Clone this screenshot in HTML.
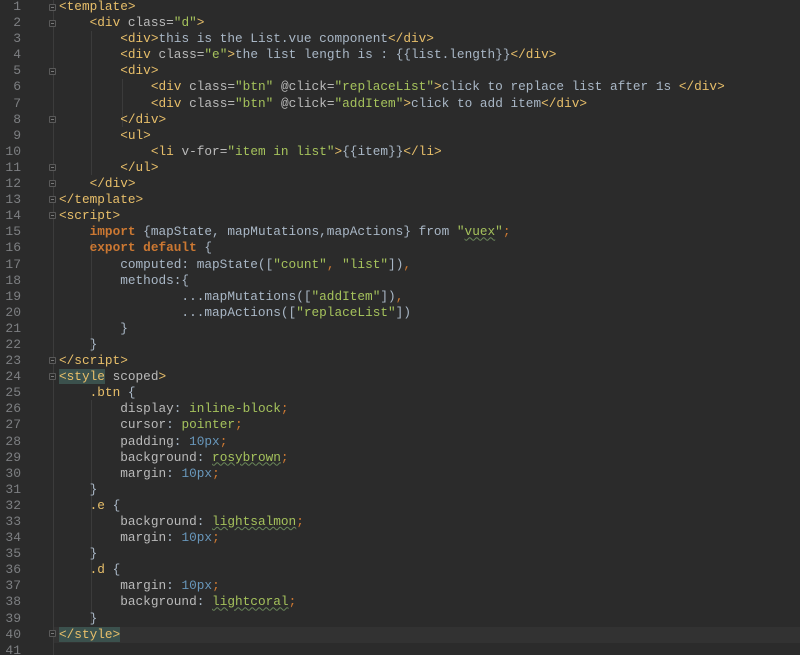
<!DOCTYPE html>
<html><head><style>
html,body{margin:0;padding:0;background:#2b2b2b;width:800px;height:655px;overflow:hidden}
.wrap{position:relative;width:800px;height:655px}
.gut{position:absolute;left:0;top:0;width:53px;height:655px;background:#2b2b2b;border-right:1px solid #3c3c3c}
.ln{position:absolute;left:0;width:21px;text-align:right;color:#7d7f82;font:13px/16.1px "Liberation Mono",monospace}
.code{position:absolute;left:59px;top:-1px;margin:0;color:#a9b7c6;font:12.75px/16.1px "Liberation Mono",monospace;white-space:pre}
.cur{position:absolute;left:54px;top:627px;width:746px;height:16px;background:#323232}
.t{color:#e8bf6a}.a{color:#bababa}.s{color:#a5c25c}.k{color:#cc7832;font-weight:bold}.o{color:#cc7832}.n{color:#6897bb}.p{color:#bababa}.v{color:#a5c25c}
.m{background:#3b514d}
.u{text-decoration:underline wavy #6a8759;text-decoration-thickness:1px}
.g{position:absolute;width:1px;background:#3b3b3b}
.f{position:absolute;left:49px;width:7px;height:7px;border:1px solid #5a5a5a;border-radius:1px;background:#2b2b2b;box-sizing:border-box}
.f:after{content:"";position:absolute;left:1px;top:2px;width:3px;height:1px;background:#7a7a7a}
</style></head><body><div class="wrap">
<div class="gut"></div>
<div class="cur"></div>
<div class="g" style="left:91px;top:31px;height:144px"></div>
<div class="g" style="left:122px;top:79px;height:48px"></div>
<div class="g" style="left:91px;top:240px;height:112px"></div>
<div class="g" style="left:91px;top:400px;height:224px"></div>
<div class="f" style="top:4px"></div><div class="f" style="top:20px"></div><div class="f" style="top:68px"></div>
<div class="f" style="top:116px"></div><div class="f" style="top:180px"></div><div class="f" style="top:196px"></div>
<div class="f" style="top:212px"></div><div class="f" style="top:357px"></div><div class="f" style="top:373px"></div>
<div class="f" style="top:164px"></div><div class="f" style="top:630px"></div>
<pre class="code"><span class="t">&lt;template&gt;</span>
    <span class="t">&lt;div</span> <span class="a">class=</span><span class="s">"d"</span><span class="t">&gt;</span>
        <span class="t">&lt;div&gt;</span>this is the List.vue component<span class="t">&lt;/div&gt;</span>
        <span class="t">&lt;div</span> <span class="a">class=</span><span class="s">"e"</span><span class="t">&gt;</span>the list length is : {{list.length}}<span class="t">&lt;/div&gt;</span>
        <span class="t">&lt;div&gt;</span>
            <span class="t">&lt;div</span> <span class="a">class=</span><span class="s">"btn"</span> <span class="a">@click=</span><span class="s">"replaceList"</span><span class="t">&gt;</span>click to replace list after 1s <span class="t">&lt;/div&gt;</span>
            <span class="t">&lt;div</span> <span class="a">class=</span><span class="s">"btn"</span> <span class="a">@click=</span><span class="s">"addItem"</span><span class="t">&gt;</span>click to add item<span class="t">&lt;/div&gt;</span>
        <span class="t">&lt;/div&gt;</span>
        <span class="t">&lt;ul&gt;</span>
            <span class="t">&lt;li</span> <span class="a">v-for=</span><span class="s">"item in list"</span><span class="t">&gt;</span>{{item}}<span class="t">&lt;/li&gt;</span>
        <span class="t">&lt;/ul&gt;</span>
    <span class="t">&lt;/div&gt;</span>
<span class="t">&lt;/template&gt;</span>
<span class="t">&lt;script&gt;</span>
    <span class="k">import</span> {mapState, mapMutations,mapActions} from <span class="s">"<span class="u">vuex</span>"</span><span class="o">;</span>
    <span class="k">export default</span> {
        computed: mapState([<span class="s">"count"</span><span class="o">,</span> <span class="s">"list"</span>])<span class="o">,</span>
        methods:{
                ...mapMutations([<span class="s">"addItem"</span>])<span class="o">,</span>
                ...mapActions([<span class="s">"replaceList"</span>])
        }
    }
<span class="t">&lt;/script&gt;</span>
<span class="t m">&lt;style</span> <span class="a">scoped</span><span class="t">&gt;</span>
    <span class="t">.btn</span> {
        <span class="p">display</span>: <span class="v">inline-block</span><span class="o">;</span>
        <span class="p">cursor</span>: <span class="v">pointer</span><span class="o">;</span>
        <span class="p">padding</span>: <span class="n">10px</span><span class="o">;</span>
        <span class="p">background</span>: <span class="v u">rosybrown</span><span class="o">;</span>
        <span class="p">margin</span>: <span class="n">10px</span><span class="o">;</span>
    }
    <span class="t">.e</span> {
        <span class="p">background</span>: <span class="v u">lightsalmon</span><span class="o">;</span>
        <span class="p">margin</span>: <span class="n">10px</span><span class="o">;</span>
    }
    <span class="t">.d</span> {
        <span class="p">margin</span>: <span class="n">10px</span><span class="o">;</span>
        <span class="p">background</span>: <span class="v u">lightcoral</span><span class="o">;</span>
    }
<span class="t m">&lt;/style&gt;</span>
</pre>
<div class="ln" style="top:-1px">1<br>2<br>3<br>4<br>5<br>6<br>7<br>8<br>9<br>10<br>11<br>12<br>13<br>14<br>15<br>16<br>17<br>18<br>19<br>20<br>21<br>22<br>23<br>24<br>25<br>26<br>27<br>28<br>29<br>30<br>31<br>32<br>33<br>34<br>35<br>36<br>37<br>38<br>39<br>40<br>41</div>
</div></body></html>
